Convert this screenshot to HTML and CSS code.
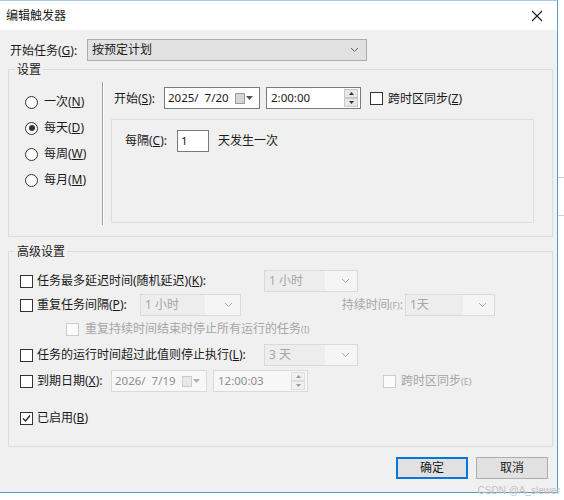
FILE: index.html
```html
<!DOCTYPE html>
<html lang="zh-CN">
<head>
<meta charset="utf-8">
<title>编辑触发器</title>
<link rel="stylesheet" href="styles.css">
</head>
<body>
<div class="screen">
  <div class="window">
    <div class="titlebar">
      <span class="title">编辑触发器</span>
      <svg class="close" width="12" height="12" viewBox="0 0 12 12"><path d="M1 1L11 11M11 1L1 11" stroke="#1a1a1a" stroke-width="1.1" fill="none"/></svg>
    </div>
    <div class="content">
      <div class="row-begin">
        <span class="lbl-begin">开始任务(<u>G</u>):</span>
        <div class="combo combo-begin"><span>按预定计划</span>
          <svg class="chev" width="9" height="6" viewBox="0 0 9 6"><path d="M1 1L4.5 4.5L8 1" stroke="#606060" fill="none"/></svg>
        </div>
      </div>

      <div class="group group-settings">
        <div class="group-title">设置</div>
        <div class="settings-body">
          <div class="radios">
            <div class="radio-row"><span class="radio"></span><span>一次(<u>N</u>)</span></div>
            <div class="radio-row"><span class="radio on"></span><span>每天(<u>D</u>)</span></div>
            <div class="radio-row"><span class="radio"></span><span>每周(<u>W</u>)</span></div>
            <div class="radio-row"><span class="radio"></span><span>每月(<u>M</u>)</span></div>
          </div>
          <div class="vsep"></div>
          <div class="settings-right">
            <div class="start-row">
              <span class="lbl-start">开始(<u>S</u>):</span>
              <div class="field date"><span>2025/&nbsp; 7/20</span>
                <span class="cal"><span class="cal-page"></span><svg width="7" height="4" viewBox="0 0 7 4"><path d="M0 0H7L3.5 4Z" fill="#555"/></svg></span>
              </div>
              <div class="field time"><span>2:00:00</span>
                <span class="spin"><span class="spin-btn"><svg width="5" height="3" viewBox="0 0 5 3"><path d="M0 3H5L2.5 0Z" fill="#333"/></svg></span><span class="spin-btn"><svg width="5" height="3" viewBox="0 0 5 3"><path d="M0 0H5L2.5 3Z" fill="#333"/></svg></span></span>
              </div>
              <span class="check"></span>
              <span class="lbl-sync">跨时区同步(<u>Z</u>)</span>
            </div>
            <div class="panel">
              <div class="panel-row">
                <span class="lbl-every">每隔(<u>C</u>):</span>
                <div class="field num"><span>1</span></div>
                <span class="lbl-days">天发生一次</span>
              </div>
            </div>
          </div>
        </div>
      </div>

      <div class="group group-adv">
        <div class="group-title">高级设置</div>
        <div class="adv-body">
          <div class="adv-row r1">
            <span class="check"></span>
            <span class="lbl-delay">任务最多延迟时间(随机延迟)(<u>K</u>):</span>
            <div class="combo dis combo-short"><span>1 小时</span><svg class="chev" width="9" height="6" viewBox="0 0 9 6"><path d="M1 1L4.5 4.5L8 1" stroke="#a8a8a8" fill="none"/></svg></div>
          </div>
          <div class="adv-row r2">
            <span class="check"></span>
            <span class="lbl-repeat">重复任务间隔(<u>P</u>):</span>
            <div class="combo dis combo-repeat"><span>1 小时</span><svg class="chev" width="9" height="6" viewBox="0 0 9 6"><path d="M1 1L4.5 4.5L8 1" stroke="#a8a8a8" fill="none"/></svg></div>
            <span class="lbl-dur">持续时间<small>(F)</small>:</span>
            <div class="combo dis combo-dur"><span>1天</span><svg class="chev" width="9" height="6" viewBox="0 0 9 6"><path d="M1 1L4.5 4.5L8 1" stroke="#a8a8a8" fill="none"/></svg></div>
          </div>
          <div class="adv-row r3">
            <span class="check dis-check sub"></span>
            <span class="gray">重复持续时间结束时停止所有运行的任务<small>(I)</small></span>
          </div>
          <div class="adv-row r4">
            <span class="check"></span>
            <span class="lbl-delay">任务的运行时间超过此值则停止执行(<u>L</u>):</span>
            <div class="combo dis combo-short"><span>3 天</span><svg class="chev" width="9" height="6" viewBox="0 0 9 6"><path d="M1 1L4.5 4.5L8 1" stroke="#a8a8a8" fill="none"/></svg></div>
          </div>
          <div class="adv-row r5">
            <span class="check"></span>
            <span class="lbl-expire">到期日期(<u>X</u>):</span>
            <div class="field date dis-field"><span>2026/&nbsp; 7/19</span>
              <span class="cal"><span class="cal-page dim"></span><svg width="7" height="4" viewBox="0 0 7 4"><path d="M0 0H7L3.5 4Z" fill="#b0b0b0"/></svg></span>
            </div>
            <div class="field time dis-field"><span>12:00:03</span>
              <span class="spin"><span class="spin-btn"><svg width="5" height="3" viewBox="0 0 5 3"><path d="M0 3H5L2.5 0Z" fill="#999"/></svg></span><span class="spin-btn"><svg width="5" height="3" viewBox="0 0 5 3"><path d="M0 0H5L2.5 3Z" fill="#999"/></svg></span></span>
            </div>
            <span class="check dis-check sync2"></span>
            <span class="gray">跨时区同步<small>(E)</small></span>
          </div>
          <div class="adv-row r6">
            <span class="check checked"><svg width="11" height="11" viewBox="0 0 11 11"><path d="M2 5.5L4.5 8L9 2.5" stroke="#222" stroke-width="1.2" fill="none"/></svg></span>
            <span>已启用(<u>B</u>)</span>
          </div>
        </div>
      </div>

      <div class="buttons">
        <div class="btn default">确定</div>
        <div class="btn">取消</div>
      </div>
    </div>
  </div>
  <div class="side">
    <div class="side-line l1"></div>
    <div class="side-line l2"></div>
  </div>
  <div class="watermark">CSDN @A_slewer</div>
</div>
</body>
</html>
```

FILE: styles.css
```css
* { box-sizing: border-box; }
html, body { margin: 0; padding: 0; }
body {
  font-family: "Noto Sans", "Noto Sans CJK SC", sans-serif;
  font-size: 12px;
  line-height: 16px;
  color: #1a1a1a;
  background: #ffffff;
}
u { text-decoration: underline; text-underline-offset: 1px; }
small { font-size: 9px; }

.screen {
  position: relative;
  width: 564px;
  height: 500px;
  overflow: hidden;
  display: flex;
  align-items: flex-start;
}

.window {
  width: 558px;
  height: 493px;
  border-top: 1px solid #a9cbe9;
  border-right: 1px solid #5b9bd5;
  border-bottom: 1px solid #5b9bd5;
  display: flex;
  flex-direction: column;
  background: #f0f0f0;
  flex: none;
}

.titlebar {
  height: 29px;
  background: #ffffff;
  display: flex;
  align-items: center;
  justify-content: space-between;
  padding: 0 14px 0 6px;
  flex: none;
}
.title { font-size: 12px; }

.content {
  flex: 1;
  padding: 9px 0 0 8px;
  display: flex;
  flex-direction: column;
}

.row-begin {
  display: flex;
  align-items: center;
  height: 22px;
  padding-left: 2px;
}
.lbl-begin { width: 77px; padding-top: 1px; }

.combo {
  height: 22px;
  border: 1px solid #adadad;
  background: #e1e1e1;
  display: flex;
  align-items: center;
  justify-content: space-between;
  padding: 0 7px 0 4px;
}
.combo-begin { width: 280px; }
.combo.dis {
  background: #f5f5f5;
  border-color: #d9d9d9;
  color: #a6a6a6;
  padding-left: 0;
}
.combo.dis > span {
  background: #ededed;
  height: 20px;
  line-height: 20px;
  padding-left: 4px;
  width: 70%;
}
.combo-short { width: 94px; }
.combo-repeat { width: 101px; }
.combo-dur { width: 90px; }

.group {
  border: 1px solid #dcdcdc;
  width: 545px;
}
.group-title {
  margin: -8px 0 0 6px;
  padding: 0 2px;
  background: #f0f0f0;
  width: fit-content;
  height: 16px;
}
.group-settings { margin-top: 8px; height: 168px; }
.group-adv { margin-top: 14px; height: 196px; }

.settings-body { display: flex; margin-top: -1px; }
.radios {
  width: 93px;
  padding: 12px 0 0 16px;
}
.radio-row {
  height: 26px;
  display: flex;
  align-items: center;
}
.radio {
  width: 13px;
  height: 13px;
  border: 1px solid #333;
  border-radius: 50%;
  background: #fff;
  margin-right: 6px;
  display: flex;
  align-items: center;
  justify-content: center;
}
.radio.on::after {
  content: "";
  width: 6px;
  height: 6px;
  border-radius: 50%;
  background: #333;
}

.vsep {
  width: 2px;
  height: 143px;
  margin-top: 5px;
  border-left: 1px solid #a0a0a0;
  border-right: 1px solid #ffffff;
}

.settings-right {
  padding: 10px 0 0 7px;
}
.start-row {
  display: flex;
  align-items: center;
  height: 22px;
  padding-left: 3px;
}
.lbl-start { width: 50px; padding-top: 2px; }
.lbl-sync { padding-top: 1px; }

.field {
  height: 22px;
  border: 1px solid #7a7a7a;
  background: #fff;
  display: flex;
  align-items: center;
  justify-content: space-between;
  padding: 0 2px 0 3px;
  font-size: 11.5px;
}
.date { width: 96px; padding-right: 6px; }
.time { width: 95px; margin-left: 6px; padding-left: 4px; }
.num { width: 32px; }

.cal { display: flex; align-items: center; gap: 1px; }
.cal-page {
  width: 10px;
  height: 11px;
  background: #d6d6d6;
  border: 1px solid #9a9a9a;
}
.cal-page.dim { background: #e8e8e8; border-color: #cccccc; }

.spin {
  display: flex;
  flex-direction: column;
  height: 18px;
}
.spin-btn {
  width: 14px;
  height: 9px;
  border: 1px solid #c8c8c8;
  background: #e8e8e8;
  display: flex;
  align-items: center;
  justify-content: center;
}

.check {
  width: 13px;
  height: 13px;
  border: 1px solid #333;
  background: #fff;
  flex: none;
  display: flex;
  align-items: center;
  justify-content: center;
}
.start-row .check { margin-left: 9px; margin-right: 5px; }
.dis-check { border-color: #cccccc; background: #fbfbfb; }

.panel {
  margin-top: 10px;
  width: 423px;
  height: 104px;
  border: 1px solid #dedede;
  padding: 10px 0 0 13px;
}
.panel-row { display: flex; align-items: center; }
.lbl-every { width: 52px; }
.lbl-days { margin-left: 9px; }

.adv-body { padding: 10px 0 0 11px; }
.adv-row {
  height: 22px;
  display: flex;
  align-items: center;
}
.adv-row > .check { margin-right: 4px; }
.r2, .r3 { margin-top: 2px; }
.r4, .r5 { margin-top: 4px; }
.r6 { margin-top: 15px; }
.lbl-delay { width: 227px; }
.lbl-repeat { width: 103px; }
.lbl-dur {
  width: 164px;
  text-align: right;
  padding-right: 2px;
  color: #a6a6a6;
}
.gray { color: #a6a6a6; }
.check.sub { margin-left: 46px; margin-right: 6px; }
.lbl-expire { width: 74px; }
.dis-field {
  border-color: #d9d9d9;
  background: #f7f7f7;
  color: #8f8f8f;
}
.r5 .time { margin-left: 6px; }
.dis-field .spin-btn { border-color: #dddddd; background: #f0f0f0; }
.check.sync2 { margin-left: 75px; margin-right: 5px; }

.buttons {
  display: flex;
  justify-content: flex-end;
  gap: 8px;
  margin-top: 10px;
  padding-right: 9px;
}
.btn {
  width: 72px;
  height: 22px;
  border: 1px solid #adadad;
  background: #e1e1e1;
  display: flex;
  align-items: center;
  justify-content: center;
}
.btn.default { border: 2px solid #0078d7; }

.side {
  flex: 1;
  height: 500px;
  background: #ffffff;
  display: flex;
  flex-direction: column;
}
.side-line { height: 1px; background: #cfcfcf; }
.l1 { margin-top: 177px; }
.l2 { margin-top: 37px; }

.watermark {
  position: absolute;
  right: 4px;
  bottom: 3px;
  font-size: 10px;
  line-height: 12px;
  color: #c4c4c4;
  font-family: "Liberation Sans", sans-serif;
}
```
